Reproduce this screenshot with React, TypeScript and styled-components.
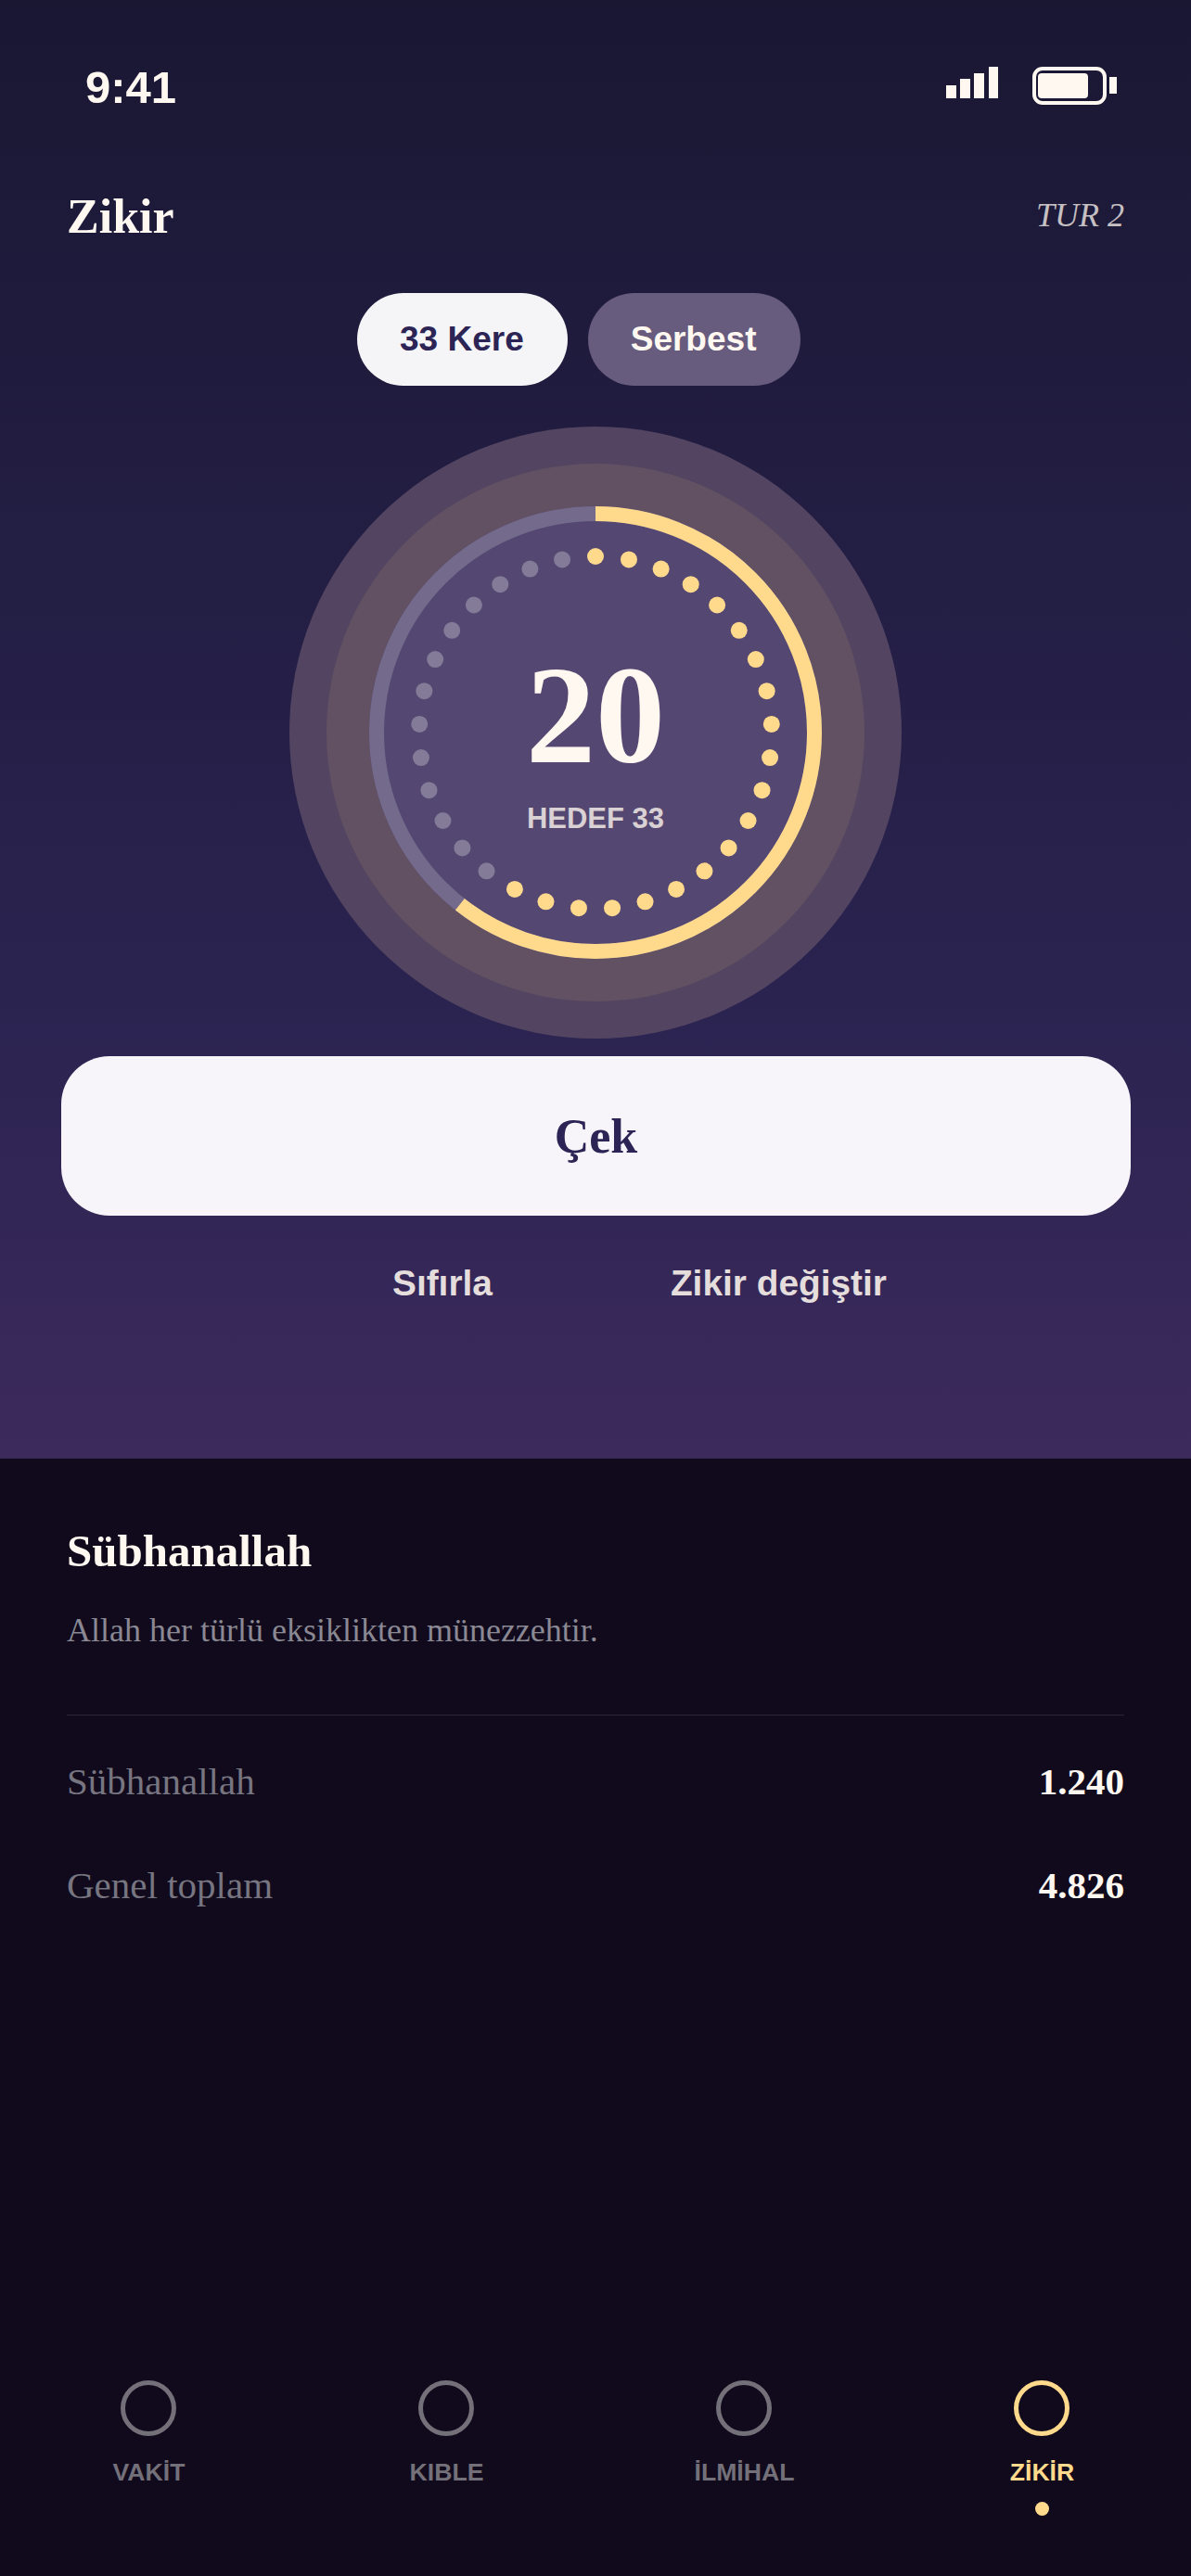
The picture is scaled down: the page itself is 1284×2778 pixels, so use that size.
import React from "react";
import styled, { createGlobalStyle } from "styled-components";

const SANS = `"Liberation Sans", Arial, sans-serif`;
const SERIF = `"Liberation Serif", "Times New Roman", serif`;
const CREAM = "#fff8f0";
const GOLD = "#ffd98c";
const INK = "#2b2454";

const Global = createGlobalStyle`
  html, body { margin: 0; padding: 0; background: #100a1c; }
  * { box-sizing: border-box; }
`;

const Page = styled.div`
  width: 1284px;
  height: 2778px;
  display: flex;
  flex-direction: column;
  background: #100a1c;
  overflow: hidden;
`;

const Hero = styled.section`
  height: 1573px;
  flex: none;
  background: linear-gradient(180deg, #1a1733 0%, #2a2350 68%, #3c2a5c 100%);
`;

const StatusBar = styled.div`
  height: 204px;
  padding: 66px 80px 0 92px;
  display: flex;
  justify-content: space-between;
  align-items: flex-start;
`;

const Time = styled.div`
  font: 700 49px/56px ${SANS};
  color: ${CREAM};
`;

const StatusIcons = styled.div`
  display: flex;
  align-items: flex-start;
  margin-top: 6px;
  gap: 37px;
`;

const Header = styled.header`
  padding: 0 72px;
  height: 60px;
  display: flex;
  justify-content: space-between;
  align-items: flex-start;
`;

const Title = styled.h1`
  margin: 0;
  font: 700 52px/60px ${SERIF};
  color: ${CREAM};
`;

const Round = styled.div`
  font: italic 400 36px/56px ${SERIF};
  color: rgba(255, 248, 240, 0.76);
`;

const Pills = styled.div`
  margin-top: 52px;
  padding-left: 385px;
  display: flex;
  gap: 22px;
`;

const Pill = styled.div<{ $active?: boolean }>`
  height: 100px;
  padding: 0 ${(p) => (p.$active ? 47 : 48)}px 0 46px;
  border-radius: 50px;
  display: flex;
  align-items: center;
  font: 700 37px/44px ${SANS};
  background: ${(p) => (p.$active ? "#f5f4f7" : "#675b7e")};
  color: ${(p) => (p.$active ? INK : CREAM)};
`;

const HaloOuter = styled.div`
  width: 660px;
  height: 660px;
  margin: 44px 0 0 312px;
  border-radius: 50%;
  background: #534561;
  display: flex;
  align-items: center;
  justify-content: center;
`;

const HaloInner = styled.div`
  width: 580px;
  height: 580px;
  border-radius: 50%;
  background: #625163;
  display: flex;
  align-items: center;
  justify-content: center;
`;

const Dial = styled.div`
  position: relative;
  width: 488px;
  height: 488px;
  border-radius: 50%;
  background: #544872;
  display: flex;
  flex-direction: column;
  align-items: center;
  padding-top: 150px;
`;

const DialArt = styled.svg`
  position: absolute;
  inset: 0;
`;

const Count = styled.div`
  position: relative;
  font: 700 150px/150px ${SERIF};
  color: ${CREAM};
`;

const Target = styled.div`
  position: relative;
  margin-top: 19px;
  font: 700 31px/36px ${SANS};
  color: rgba(255, 248, 240, 0.78);
`;

const PullButton = styled.div`
  width: 1153px;
  height: 172px;
  margin: 19px 0 0 66px;
  padding-top: 2px;
  border-radius: 52px;
  background: #f7f5f9;
  display: flex;
  align-items: center;
  justify-content: center;
  font: 700 52px/60px ${SERIF};
  color: ${INK};
`;

const Links = styled.div`
  margin-top: 50px;
  padding-left: 423px;
  display: flex;
  gap: 192px;
`;

const LinkText = styled.div`
  font: 700 38.85px/46px ${SANS};
  color: rgba(255, 248, 240, 0.88);
`;

const Lower = styled.section`
  flex: 1;
  display: flex;
  flex-direction: column;
  padding: 72px 72px 0;
`;

const PhraseName = styled.h2`
  margin: 0;
  font: 700 49px/56px ${SERIF};
  color: ${CREAM};
`;

const Meaning = styled.p`
  margin: 35px 0 0;
  font: 400 36px/44px ${SERIF};
  color: #8a8893;
`;

const Divider = styled.hr`
  margin: 69px 0 0;
  height: 1px;
  border: 0;
  background: #2a2635;
`;

const Stats = styled.div`
  margin-top: 47px;
  display: flex;
  flex-direction: column;
  gap: 64px;
`;

const StatRow = styled.div`
  display: flex;
  justify-content: space-between;
`;

const StatLabel = styled.span`
  font: 400 41px/48px ${SERIF};
  color: #777580;
`;

const StatValue = styled.span`
  font: 700 41px/48px ${SERIF};
  color: ${CREAM};
`;

const Nav = styled.nav`
  display: grid;
  grid-template-columns: repeat(4, 321px);
  height: 211px;
  flex: none;
`;

const NavItem = styled.div<{ $active?: boolean }>`
  display: flex;
  flex-direction: column;
  align-items: center;
  color: ${(p) => (p.$active ? GOLD : "#73707a")};
`;

const NavRing = styled.div`
  width: 60px;
  height: 60px;
  margin-right: 1px;
  border-radius: 50%;
  border: 5px solid currentColor;
`;

const NavLabel = styled.div`
  margin-top: 23px;
  font: 700 26.6px/32px ${SANS};
`;

const NavDot = styled.div`
  width: 15px;
  height: 15px;
  margin-top: 16px;
  border-radius: 50%;
  background: currentColor;
`;

const TOTAL = 33;
const DONE = 20;
const C = 244;
const RING_R = 236;
const DOT_R = 190;
const circumference = 2 * Math.PI * RING_R;

const dots = Array.from({ length: TOTAL }, (_, i) => {
  const a = (i / TOTAL) * 2 * Math.PI;
  return { x: C + DOT_R * Math.sin(a), y: C - DOT_R * Math.cos(a), on: i < DONE };
});

const SignalIcon = () => (
  <svg width="56" height="34" viewBox="0 0 56 34" fill={CREAM}>
    <rect x="0" y="20" width="11" height="14" />
    <rect x="15" y="13" width="11" height="21" />
    <rect x="30" y="7" width="11" height="27" />
    <rect x="46" y="0" width="10" height="34" />
  </svg>
);

const BatteryIcon = () => (
  <svg width="91" height="41" viewBox="0 0 91 41" fill="none">
    <rect x="2" y="2" width="76" height="37" rx="9" stroke={CREAM} strokeWidth="4" />
    <rect x="6" y="7" width="54" height="27" rx="4" fill={CREAM} />
    <rect x="83" y="11" width="8" height="18" fill={CREAM} />
  </svg>
);

const navItems = ["VAKİT", "KIBLE", "İLMİHAL", "ZİKİR"];

export default function App() {
  return (
    <Page>
      <Global />
      <Hero>
        <StatusBar>
          <Time>9:41</Time>
          <StatusIcons>
            <SignalIcon />
            <BatteryIcon />
          </StatusIcons>
        </StatusBar>
        <Header>
          <Title>Zikir</Title>
          <Round>TUR 2</Round>
        </Header>
        <Pills>
          <Pill $active>33 Kere</Pill>
          <Pill>Serbest</Pill>
        </Pills>
        <HaloOuter>
          <HaloInner>
            <Dial>
              <DialArt width="488" height="488" viewBox="0 0 488 488">
                <circle cx={C} cy={C} r={RING_R} fill="none" stroke="#736a8c" strokeWidth="16" />
                <circle
                  cx={C}
                  cy={C}
                  r={RING_R}
                  fill="none"
                  stroke={GOLD}
                  strokeWidth="16"
                  strokeDasharray={`${(circumference * DONE) / TOTAL} ${circumference}`}
                  transform={`rotate(-90 ${C} ${C})`}
                />
                {dots.map((d, i) => (
                  <circle key={i} cx={d.x} cy={d.y} r="9" fill={d.on ? GOLD : "#837b97"} />
                ))}
              </DialArt>
              <Count>20</Count>
              <Target>HEDEF 33</Target>
            </Dial>
          </HaloInner>
        </HaloOuter>
        <PullButton>Çek</PullButton>
        <Links>
          <LinkText>Sıfırla</LinkText>
          <LinkText>Zikir değiştir</LinkText>
        </Links>
      </Hero>
      <Lower>
        <PhraseName>Sübhanallah</PhraseName>
        <Meaning>Allah her türlü eksiklikten münezzehtir.</Meaning>
        <Divider />
        <Stats>
          <StatRow>
            <StatLabel>Sübhanallah</StatLabel>
            <StatValue>1.240</StatValue>
          </StatRow>
          <StatRow>
            <StatLabel>Genel toplam</StatLabel>
            <StatValue>4.826</StatValue>
          </StatRow>
        </Stats>
      </Lower>
      <Nav>
        {navItems.map((label, i) => {
          const active = i === navItems.length - 1;
          return (
            <NavItem key={label} $active={active}>
              <NavRing />
              <NavLabel>{label}</NavLabel>
              {active && <NavDot />}
            </NavItem>
          );
        })}
      </Nav>
    </Page>
  );
}
